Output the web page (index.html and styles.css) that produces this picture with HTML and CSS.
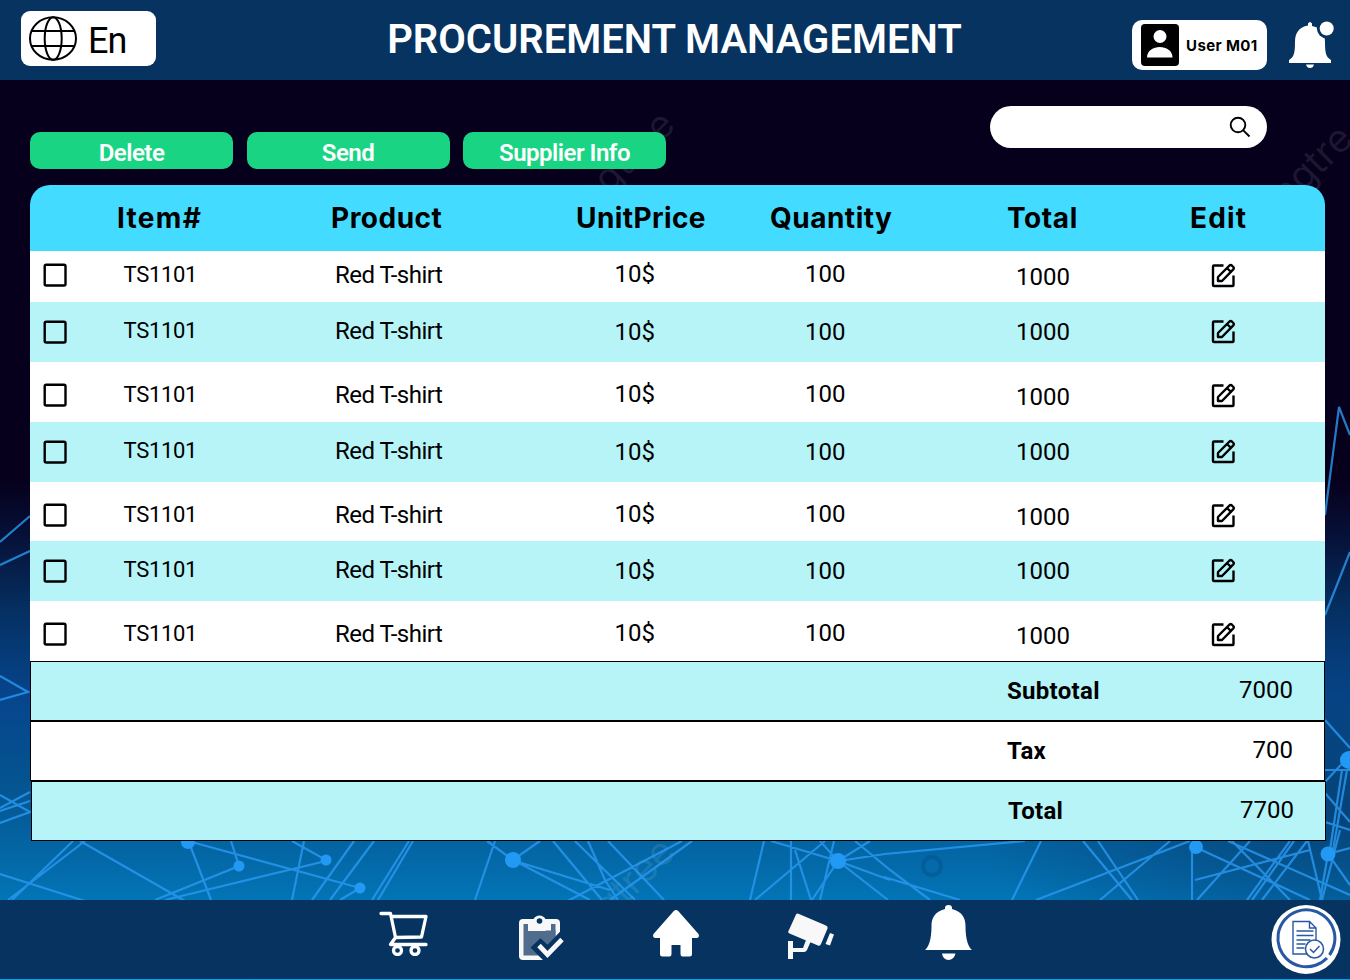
FILE: index.html
```html
<!DOCTYPE html>
<html lang="en">
<head>
<meta charset="utf-8">
<title>Procurement Management</title>
<link rel="stylesheet" href="styles.css">
</head>
<body>
<svg class="backdrop" width="1350" height="980" viewBox="0 0 1350 980" aria-hidden="true">
  <defs>
    <linearGradient id="sky" x1="0" y1="0" x2="0" y2="1">
      <stop offset="0" stop-color="#06001c"/><stop offset=".49" stop-color="#06001c"/>
      <stop offset=".55" stop-color="#06123a"/><stop offset=".62" stop-color="#052f60"/>
      <stop offset=".71" stop-color="#06458c"/><stop offset=".8" stop-color="#045490"/>
      <stop offset=".88" stop-color="#0469a8"/><stop offset=".93" stop-color="#0278ba"/>
      <stop offset="1" stop-color="#06a0ee"/>
    </linearGradient>
    <radialGradient id="shade"><stop offset="0" stop-color="#063c70" stop-opacity=".8"/><stop offset="1" stop-color="#063c70" stop-opacity="0"/></radialGradient>
  </defs>
  <rect width="1350" height="980" fill="url(#sky)"/>
  <ellipse cx="1350" cy="810" rx="380" ry="170" fill="url(#shade)"/>
  <g class="watermark">
    <text transform="translate(576 228) rotate(-45)">pngtree</text>
    <text transform="translate(1270 226) rotate(-45)">pngtre</text>
    <text transform="translate(576 955) rotate(-45)">pngtree</text>
    <circle cx="932" cy="866" r="9" fill="none" stroke="#05508c" stroke-opacity=".5" stroke-width="4"/>
  </g>
  <g class="threads">
    <path d="M0 874 85 901M12 900 73 841M8 900 85 841M80 841 185 901M188 841 360 888M190 845 211 900M231 841 239 866 155 900M292 841 326 860M326 861 165 900M304 841 292 900M354 841 312 900M374 841 330 900M409 841 372 900M413 841 378 900M360 888 340 900"/>
    <path d="M495 841 475 900M487 841 513 860 540 841M515 861 590 900M515 861 610 890M553 841 602 900M575 841 635 900M588 841 605 880 618 900M608 841 664 900M682 841 560 905M692 841 610 900M764 841 750 900M771 841 838 861M755 900 825 841M791 841V900M795 850 811 900M834 841 820 900M838 861 812 900M838 861 870 841M820 841 838 861 885 854 1025 841M838 861 890 880M838 861 888 900M855 841 890 870 930 900M884 877 960 900"/>
    <path d="M1041 841 1012 900M1083 841 1132 900M1098 841 1138 900M1036 900 1190 841M1170 841 1100 900M1192 847V900M1195 847 1310 900M1195 880 1310 850M1197 900 1250 841M1228 841 1350 895M1290 841 1247 900M1294 841 1252 900M1307 841 1262 900M1232 841 1290 900M1308 841 1322 900M1350 848 1328 854 1350 885M1328 854 1320 900M1340 830 1322 900"/>
    <path d="M1325 515 1339 407 1350 435M1325 615 1350 552M1325 720 1350 748M1325 782 1350 755M1325 770H1350M1325 793 1350 822M1325 822 1350 830M1342 770 1330 850M1347 770 1333 850"/>
    <path d="M0 542 30 516M0 565 30 551M0 676 28 692 0 700M0 795 30 812 0 823M0 808 30 792M0 811 30 801"/>
  </g>
  <g fill="#2299f5">
    <circle cx="188" cy="842" r="7"/><circle cx="239" cy="866" r="5.500"/><circle cx="326" cy="860" r="5.500"/><circle cx="360" cy="888" r="5.500"/>
    <circle cx="513" cy="860" r="8"/><circle cx="838" cy="861" r="8"/><circle cx="1196" cy="847" r="7"/><circle cx="1328" cy="854" r="7.500"/><circle cx="1349" cy="760" r="9"/>
  </g>
</svg>

<div class="app">
  <header class="topbar">
    <div class="language">
      <svg width="50" height="46" viewBox="0 0 50 46" fill="none" stroke="#000" stroke-width="2"><ellipse cx="25" cy="22.500" rx="23" ry="21.300"/><ellipse cx="25.200" cy="22.500" rx="8.500" ry="21.300"/><path d="M4 15H46M4 30H46"/></svg>
      <span>En</span>
    </div>
    <h1 class="title">PROCUREMENT MANAGEMENT</h1>
    <div class="user">
      <svg width="38" height="42" viewBox="0 0 38 42"><rect width="38" height="42" rx="4"/><circle cx="19" cy="12.500" r="6.500" fill="#fff"/><path d="M6 33.500C6 19.500 31.500 19.500 31.500 33.500Z" fill="#fff"/></svg>
      <span>User M01</span>
    </div>
    <svg class="alert" width="46" height="48" viewBox="0 0 46 48" fill="#fff"><path d="M20 4V3.500q2-3 4 0V6C32 7.500 37 13 37 22c0 11 1 15 6 18v3H1v-3c5-3 6-7 6-18C7 13 11 7 20 5.500Z"/><path d="M18 44.500h8q-1 3.500-4 3.500t-4-3.500Z"/><circle cx="38.700" cy="8.500" r="9.800" fill="#063360"/><circle cx="38.700" cy="8.500" r="7"/></svg>
  </header>

  <main class="content">
    <div class="tools">
      <div class="buttons">
        <button class="button">Delete</button>
        <button class="button">Send</button>
        <button class="button">Supplier Info</button>
      </div>
      <div class="search">
        <svg width="22" height="22" viewBox="0 0 22 22" fill="none" stroke="#000" stroke-width="1.900"><circle cx="9" cy="9" r="7.300"/><path d="m14.300 14.300 6.200 6.200"/></svg>
      </div>
    </div>

    <section class="table">
      <div class="table-head">
        <span></span><span class="h-item">Item#</span><span class="h-product">Product</span><span class="h-price">UnitPrice</span><span class="h-qty">Quantity</span><span class="h-total">Total</span><span class="h-edit">Edit</span>
      </div>
      <div class="rows" id="rows"></div>
      <div class="summary"><b>Subtotal</b><span>7000</span></div>
      <div class="summary white"><b>Tax</b><span>700</span></div>
      <div class="summary last"><b>Total</b><span>7700</span></div>
    </section>
  </main>

  <footer class="dock">
    <nav class="nav">
      <svg width="50" height="46" viewBox="0 0 50 46" fill="none" stroke="#fff" stroke-width="3.300" stroke-linecap="round" stroke-linejoin="round"><path d="M2 3.500h9.500l5 24-5 7H47M12 6.500H47l-4.500 20.500-26 .5"/><circle cx="18.500" cy="40.500" r="4"/><circle cx="36" cy="40.500" r="4"/></svg>
      <svg width="46" height="48" viewBox="0 0 46 48"><path d="M4 9h34v34H4Z" fill="#516d8d"/><path d="M4 5h10.500a7 7 0 0 1 12 0H37q4 0 4 4V18l-4.500 4.500V10H32v7H9V10H4.500v31.500H20l5 4.500H4q-4 0-4-4V9q0-4 4-4Z" fill="#f8f8f8"/><circle cx="20.500" cy="7" r="2.800" fill="#063360"/><path d="M11.500 33.500 21.500 24l7 6.500L41 18h5v20L32 49h-5Z" fill="#063360"/><path d="M17 28.500 21.500 24l7 6.500 8-8.500V16.500H27Z" fill="#516d8d"/><path d="m20 31.500 8.500 9L43 25.500" fill="none" stroke="#f8f8f8" stroke-width="4.800"/></svg>
      <svg width="46" height="47" viewBox="0 0 46 47" fill="#fff"><path d="M21 .8q2-1.500 4 0L45.500 24q1.500 4-2 4H39v16q0 2.500-2.500 2.500h-7q-2 0-2-2.500V35h-9v9q0 2.500-2 2.500H9.500Q7 46.500 7 44V28H2.500q-3.500 0-2-4Z"/></svg>
      <svg width="46" height="47" viewBox="0 0 46 47" fill="#f8f8f8"><path d="M8 1.500Q9 0 11 1L38 12.500q2 1 1.500 3L33 31q-1 2.500-3 1.500L1.500 20.500Q-.5 19.500.5 18ZM42 20l4 1.500-4 11-4.500-1.500ZM0 28h5v7h10l3-8 4.500 2-3.500 8q-1 2-3 2H5v7H0Z"/></svg>
      <svg width="48" height="56" viewBox="0 0 48 56" fill="#fff"><path d="M20 3q0-3 3.500-3T27 3v1C37.500 7 40.500 13 40.500 21c0 14 3 21 6.500 24H0C3.500 42 6.500 35 6.500 21 6.500 13 9.500 7 20 4ZM17 48.500h13.500q-1.500 6.500-7 6.500T17 48.500Z"/></svg>
    </nav>
    <svg class="report" width="70" height="70" viewBox="0 0 70 70" fill="none" stroke="#2758a5"><circle cx="35" cy="34.500" r="34.500" fill="#fff" stroke="none"/><path d="M58.500 50A28.500 28.500 0 1 0 56 53" stroke-width="3"/><path d="M22 16.500H38.500l6.500 6.500v26H22ZM38.500 16.500V23H45M25.500 26h17M25.500 30.500h17M25.500 35h14M25.500 39h9M25.500 43h8" stroke-width="1.400"/><circle cx="43.500" cy="44" r="9" fill="#fff" stroke-width="1.500"/><path d="m39 44 3.500 3.500L48.500 41" stroke-width="1.500"/></svg>
  </footer>
</div>
<script src="rows.js"></script>
</body>
</html>
```
FILE: styles.css
```css
* { box-sizing: border-box; }
body { margin: 0; width: 1350px; height: 980px; overflow: hidden; background: #06001c; color: #000; font-family: Roboto, "Liberation Sans", sans-serif; }
.backdrop { position: absolute; top: 0; left: 0; z-index: -1; }
.watermark { fill: #fff; fill-opacity: .09; font: 39px Inter, sans-serif; }
.threads { fill: none; stroke: #2a9af2; stroke-width: 2.2; stroke-opacity: .8; }
.app { display: flex; flex-direction: column; height: 979px; }

.topbar { display: flex; align-items: flex-start; height: 80px; padding-left: 21px; background: #063360; }
.language { display: flex; width: 135px; height: 55px; margin-top: 11px; padding: 5px 0 0 7px; border-radius: 9px; background: #fff; font-size: 36px; line-height: 50px; }
.language span { margin-left: 10px; letter-spacing: -1px; }
.title { width: 640px; margin: 16px 0 0 198.500px; color: #fff; font-size: 40px; line-height: 48px; font-weight: 600; text-align: center; white-space: nowrap; }
.user { display: flex; align-items: center; width: 135px; height: 50px; margin: 20px 0 0 137.500px; padding-left: 9px; border-radius: 10px; background: #fff; font: 700 15px Inter, sans-serif; }
.user span { margin-left: 7px; letter-spacing: .4px; white-space: nowrap; }
.alert { margin: 20px 0 0 21px; }

.content { height: 820px; padding: 26px 25px 0 30px; }
.tools { display: flex; justify-content: space-between; height: 79px; padding-right: 58px; }
.buttons { display: flex; gap: 13.500px; padding-top: 26px; }
.button { width: 203px; height: 37px; padding: 6px 0 0; border: 0; border-radius: 10px; background: #19d583; color: #fff; font: 600 24px/31px Roboto, sans-serif; letter-spacing: -.5px; }
.search { display: flex; justify-content: flex-end; width: 277px; height: 42px; padding: 10px 16px 0 0; border-radius: 21px; background: #fff; }

.table { width: 1296px; }
.table-head, .row { display: grid; grid-template-columns: 87px 214px 245px 194px 237px 183px 135px; width: 1295px; }
.table-head { height: 66px; border-radius: 20px 20px 0 0; background: #43dbff; font: 650 28px/66px Inter, sans-serif; }
.h-item { letter-spacing: 1.3px; }
.h-product { letter-spacing: .5px; }
.h-price { letter-spacing: .4px; }
.h-qty { letter-spacing: .5px; }
.h-total { letter-spacing: .6px; }
.h-edit { letter-spacing: 1.2px; }
.row { height: 60px; background: #fff; font-size: 24px; line-height: 28px; }
.row.even { background: #b6f4f7; }
.row.first { height: 51px; }
.row.first > * { margin-top: -9px; }
.row.short { height: 59px; }
.row .check { padding: 21px 0 0 13px; }
.row.even .check { padding-top: 18px; }
.row .item { padding: 18.500px 0 0 6.500px; font-size: 22px; letter-spacing: -.3px; }
.row.even .item { padding-top: 15px; }
.row .product { padding: 19px 0 0 4px; letter-spacing: -.5px; }
.row.even .product { padding-top: 15px; }
.row .price { padding: 18px 0 0 38.500px; }
.row .qty { padding: 18px 0 0 35px; }
.row .total { padding: 21px 0 0 9px; }
.row.even .total, .row.even .price, .row.even .qty { padding-top: 16px; }
.row .edit { padding: 20.500px 0 0 21px; }
.row.even .edit { padding-top: 16.500px; }
.row svg { display: block; }
.summary { display: flex; justify-content: space-between; width: 1295px; height: 60px; padding: 0 31px 0 976px; border: 1px solid #000; background: #b6f4f7; font-size: 24px; line-height: 57px; }
.summary b { padding-top: 1px; font-weight: 700; letter-spacing: .3px; }
.summary.white { background: #fff; }
.summary.last { margin-left: 1px; }

.dock { display: flex; justify-content: space-between; height: 79px; padding: 5px 9px 0 379px; background: #063360; }
.nav { display: grid; grid-template-columns: 140px 134px 135px 136.500px 48px; padding-top: 5px; }
.nav svg:nth-child(2) { margin-top: 4px; }
.nav svg:nth-child(4) { margin-top: 3px; }
.nav svg:nth-child(5) { margin-top: -5px; }
```
FILE: rows.js
```js
const variants = ["first", "even", "", "even", "short", "even", ""];
document.getElementById("rows").innerHTML = variants.map(name => `
  <div class="row ${name}">
    <span class="check"><svg width="24" height="24" viewBox="0 0 24 24" fill="none" stroke="#000" stroke-width="2.400"><rect x="1.700" y="1.700" width="20.800" height="20.800" rx="1.500"/></svg></span>
    <span class="item">TS1101</span>
    <span class="product">Red T-shirt</span>
    <span class="price">10$</span>
    <span class="qty">100</span>
    <span class="total">1000</span>
    <span class="edit"><svg width="25" height="25" viewBox="0 0 25 25" fill="none" stroke="#000" stroke-width="2.400" stroke-linejoin="round"><path d="M12.500 2.500H3q-1 0-1 1V22q0 1 1 1h18.500q1 0 1-1V12.500"/><path d="M7 14 18.500 2.500q1.200-1 2.300 0l1.500 1.500q1 1.200 0 2.300L11 18H7ZM16 5l4 4"/></svg></span>
  </div>`).join("");
```
